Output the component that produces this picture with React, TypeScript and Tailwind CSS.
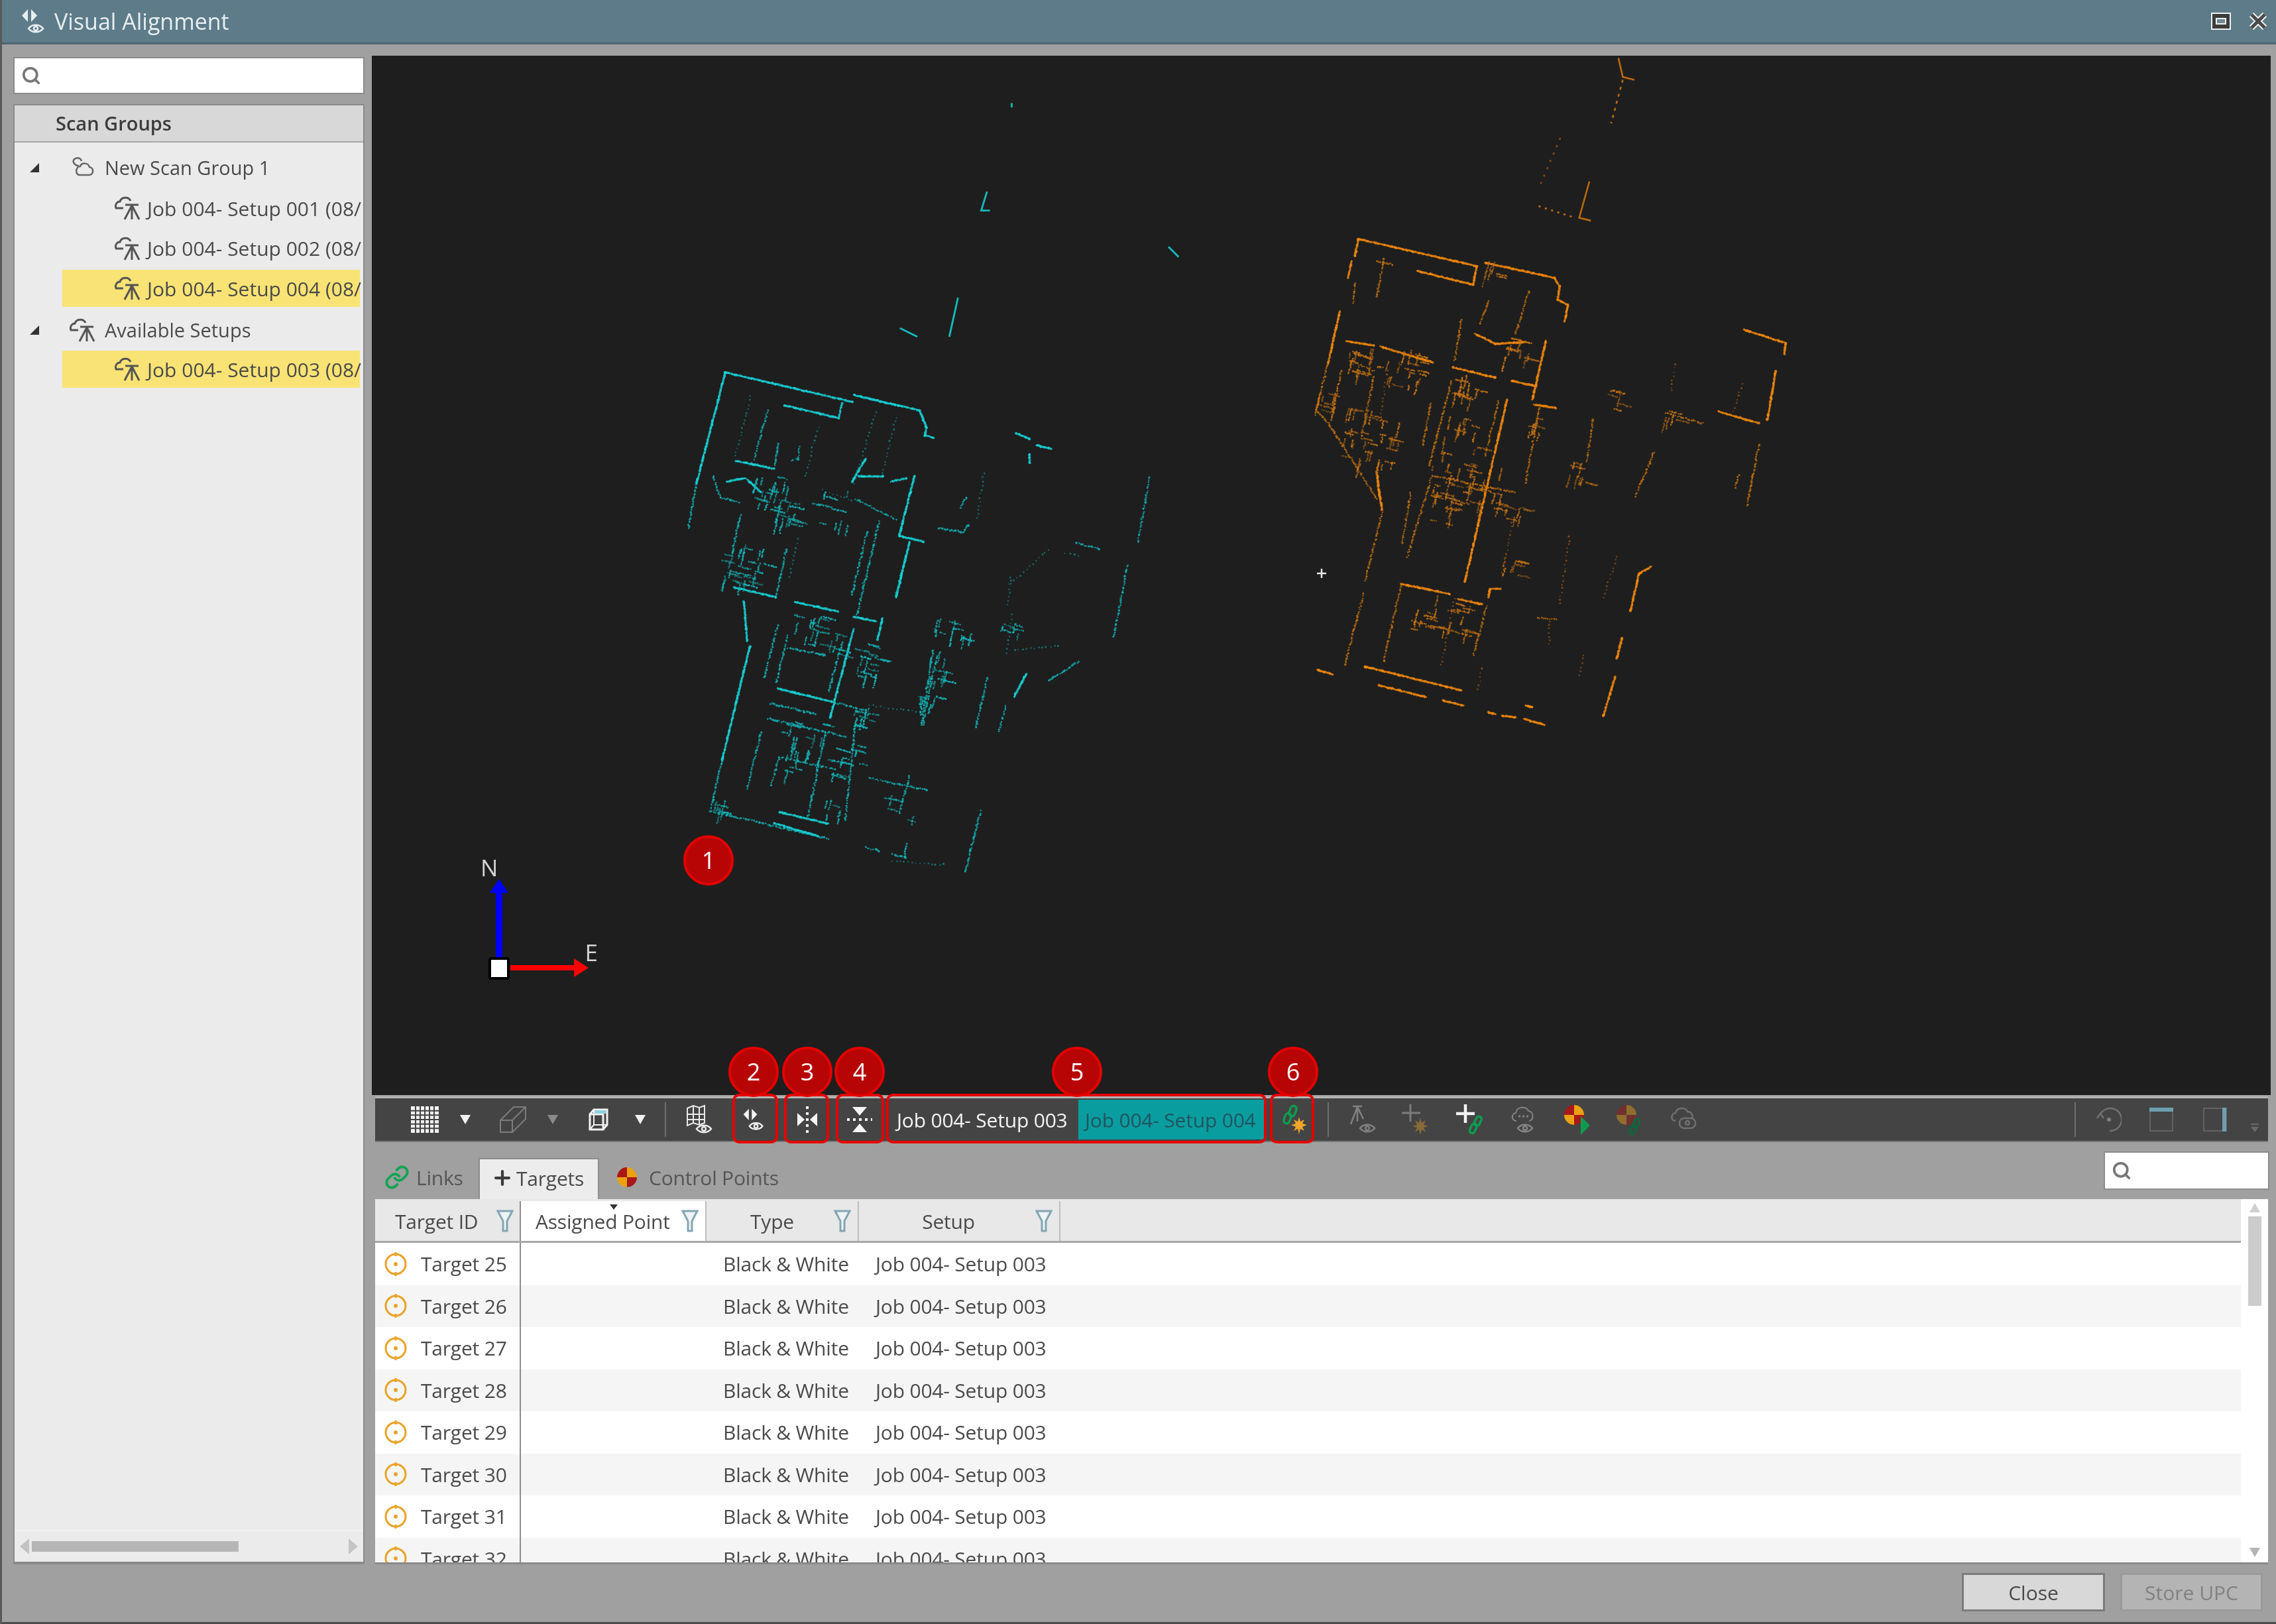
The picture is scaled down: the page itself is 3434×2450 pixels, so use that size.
import { FC, ReactNode } from "react";
import { Link as LinkIcon, Plus, Search } from "lucide-react";

type Seg = number[];
type Cluster = [number, number, number, number];

// wall segments as [x1, y1, x2, y2, ...], strength picked by list
const cyanStrong: Seg[] = [
  [185, 80, 100, 400], [185, 80, 560, 165], [565, 145, 760, 190, 780, 240, 775, 262, 800, 268],
  [360, 175, 520, 212, 530, 170], [745, 378, 705, 530, 700, 552, 770, 568], [190, 395, 245, 385],
  [250, 390, 290, 425], [210, 700, 335, 728], [240, 740, 250, 855], [258, 870, 175, 1200],
  [390, 742, 520, 770], [565, 785, 630, 798], [565, 820, 495, 1075], [340, 992, 500, 1030],
  [330, 1380, 460, 1418], [345, 1348, 490, 1382], [1045, 255, 1085, 272], [1105, 290, 1150, 300],
  [1085, 315, 1085, 340], [560, 395, 600, 330], [580, 380, 650, 380], [675, 395, 720, 385],
  [215, 335, 330, 358], [730, 570, 690, 730], [650, 790, 635, 850], [1075, 950, 1040, 1015],
];
const cyanMedium: Seg[] = [
  [100, 400, 75, 530], [335, 728, 365, 590], [175, 1200, 140, 1345, 490, 1425], [310, 190, 270, 330],
  [340, 285, 330, 355], [405, 295, 400, 330, 380, 335], [150, 380, 170, 440, 225, 455], [230, 490, 205, 600],
  [570, 445, 690, 505], [605, 540, 560, 720], [640, 510, 575, 780], [725, 590, 690, 720],
  [340, 810, 300, 960], [370, 840, 335, 975], [370, 875, 480, 895], [530, 860, 490, 1000],
  [320, 1035, 450, 1065], [310, 1078, 540, 1130], [480, 1120, 430, 1360], [345, 1190, 510, 1225],
  [345, 1190, 320, 1270], [290, 1120, 250, 1280], [570, 1090, 540, 1370], [610, 1250, 780, 1285],
  [730, 1245, 700, 1350], [940, 1345, 895, 1520], [600, 1450, 640, 1460], [680, 1470, 720, 1480],
  [720, 1440, 715, 1480], [1440, 385, 1405, 570], [1375, 635, 1335, 840], [1225, 572, 1290, 590],
  [900, 440, 880, 470], [905, 520, 890, 540, 815, 530], [960, 960, 925, 1105], [1015, 1040, 995, 1115],
  [1230, 915, 1140, 970], [800, 880, 765, 1095], [810, 900, 770, 1095], [500, 1030, 600, 1055],
];
const cyanDim: Seg[] = [
  [680, 1490, 830, 1500], [1190, 600, 1230, 608], [1035, 780, 1015, 890], [1030, 670, 1020, 750],
  [630, 195, 565, 400], [690, 210, 650, 370], [260, 150, 215, 320], [460, 240, 420, 380],
  [1140, 590, 1030, 690], [950, 370, 930, 500], [610, 1040, 760, 1060], [1170, 870, 1040, 880],
  [400, 560, 375, 670], [470, 420, 560, 450], [620, 600, 590, 700],
];
const cyanClusters: Cluster[] = [
  [240, 640, 60, 130], [320, 430, 50, 90], [370, 490, 30, 45], [620, 910, 45, 80], [430, 820, 40, 50],
  [490, 860, 30, 40], [590, 1075, 25, 50], [440, 1160, 80, 110], [175, 1335, 15, 35], [840, 810, 30, 30],
  [895, 855, 20, 20], [810, 930, 40, 50], [1025, 810, 25, 26], [780, 1020, 30, 36], [500, 470, 50, 40],
  [560, 1180, 30, 30], [700, 1330, 40, 24], [510, 1340, 25, 24],
];

const orangeStrong: Seg[] = [
  [195, 60, 545, 140, 535, 195, 370, 155], [570, 130, 775, 175, 790, 200, 785, 240, 815, 255, 805, 305],
  [195, 60, 185, 110], [175, 125, 165, 175], [140, 275, 105, 430], [160, 362, 240, 375], [260, 378, 415, 425],
  [540, 340, 600, 370, 690, 365], [475, 440, 600, 470], [650, 480, 720, 495], [750, 360, 710, 535],
  [715, 550, 780, 560], [635, 535, 510, 1075], [320, 1080, 465, 1110], [490, 1125, 560, 1140],
  [580, 1120, 585, 1095, 615, 1095], [1335, 328, 1460, 368, 1455, 400], [1430, 450, 1405, 595],
  [1260, 570, 1380, 605], [1060, 1030, 1025, 1050, 1000, 1160], [975, 1240, 960, 1300], [955, 1355, 920, 1470],
  [215, 1325, 500, 1395], [255, 1380, 395, 1415], [445, 1425, 505, 1440], [75, 1335, 120, 1348],
  [580, 1460, 600, 1465], [620, 1470, 660, 1475], [685, 1480, 745, 1497], [690, 1440, 710, 1445],
  [250, 750, 255, 800, 265, 860],
];
const orangeMedium: Seg[] = [
  [105, 430, 70, 565, 110, 610, 250, 830], [145, 450, 120, 570], [270, 120, 250, 230], [250, 125, 295, 135],
  [580, 245, 555, 310], [700, 215, 660, 340], [410, 545, 385, 670], [470, 480, 405, 730], [610, 540, 570, 700],
  [730, 560, 690, 780], [350, 810, 325, 960], [410, 770, 340, 1000], [265, 870, 215, 1070], [210, 1110, 155, 1320],
  [320, 1090, 270, 1310], [415, 760, 660, 810], [575, 1145, 535, 1290], [355, 1190, 530, 1235],
  [890, 595, 870, 720], [1070, 690, 1015, 820], [1380, 670, 1345, 850], [1320, 760, 1310, 795],
  [1105, 575, 1215, 605], [725, 1180, 780, 1185], [185, 190, 180, 250], [240, 470, 205, 640], [500, 300, 480, 420],
  [170, 420, 240, 450],
];
const orangeDim: Seg[] = [
  [820, 940, 790, 1140], [960, 1000, 920, 1120], [480, 1125, 440, 1320], [560, 1330, 550, 1390],
  [760, 1190, 760, 1260], [1130, 430, 1120, 510], [1330, 490, 1305, 570], [860, 1290, 850, 1350],
  [650, 900, 620, 1060], [280, 450, 260, 600],
];
const orangeClusters: Cluster[] = [
  [230, 650, 80, 170], [210, 425, 40, 70], [330, 440, 50, 80], [510, 490, 35, 60], [500, 640, 50, 70],
  [480, 770, 60, 90], [560, 800, 60, 80], [450, 850, 50, 60], [650, 1030, 25, 30], [400, 1170, 50, 50],
  [510, 1190, 50, 50], [850, 750, 30, 40], [940, 535, 30, 24], [1115, 590, 20, 20], [100, 540, 25, 40],
  [590, 150, 20, 26], [660, 390, 40, 50], [660, 880, 25, 30], [720, 610, 25, 30],
];

const makeRand = (seed: number) => {
  let s = seed;
  return () => {
    s = (s * 16807) % 2147483647;
    return s / 2147483647;
  };
};

// clutter: short runs of points along the two axes of the building
const scatter = (clusters: Cluster[], color: string, seed: number) => {
  const next = makeRand(seed);
  const dots: ReactNode[] = [];
  clusters.forEach(([cx, cy, r, n], i) => {
    const runs = Math.ceil(n / 4);
    for (let k = 0; k < runs; k++) {
      const x = cx + (next() - 0.5) * r * 2.2;
      const y = cy + (next() - 0.5) * r * 2.2;
      const along = next() < 0.5;
      const dx = along ? 0.97 : -0.24;
      const dy = along ? 0.24 : 0.97;
      const len = 4 + Math.floor(next() * 6);
      const op = 0.45 + next() * 0.5;
      for (let p = 0; p < len; p++) {
        dots.push(
          <circle
            key={`${i}-${k}-${p}`}
            cx={x + dx * p * 5 + (next() - 0.5) * 3}
            cy={y + dy * p * 5 + (next() - 0.5) * 3}
            r={2 + next() * 1.3}
            fill={color}
            opacity={op}
          />,
        );
      }
    }
  });
  return dots;
};

// scan walls are rows of jittered points, not clean lines
const Walls: FC<{ segs: Seg[]; color: string; step: number; jitter: number; r: number; opacity: number; seed: number }> = ({
  segs,
  color,
  step,
  jitter,
  r,
  opacity,
  seed,
}) => {
  const next = makeRand(seed);
  const dots: ReactNode[] = [];
  segs.forEach((s, i) => {
    for (let p = 0; p + 3 < s.length; p += 2) {
      const dx = s[p + 2] - s[p];
      const dy = s[p + 3] - s[p + 1];
      const n = Math.max(1, Math.round(Math.hypot(dx, dy) / step));
      for (let k = 0; k <= n; k++) {
        dots.push(
          <circle
            key={`${i}-${p}-${k}`}
            cx={s[p] + (dx * k) / n + (next() - 0.5) * jitter}
            cy={s[p + 1] + (dy * k) / n + (next() - 0.5) * jitter}
            r={r * (0.75 + next() * 0.5)}
            opacity={opacity * (0.65 + next() * 0.35)}
          />,
        );
      }
    }
  });
  return <g fill={color}>{dots}</g>;
};

const PointCloud = () => (
  <svg viewBox="561 84 2865 1568" className="block h-full w-full">
    <g transform="translate(1000 520) scale(0.51 0.523)">
      <Walls segs={cyanDim} color="#12a5a8" step={12} jitter={5} r={2.6} opacity={0.65} seed={11} />
      <Walls segs={cyanMedium} color="#14b8bc" step={6} jitter={4} r={3} opacity={0.9} seed={23} />
      <Walls segs={cyanStrong} color="#18d0d4" step={3.5} jitter={2} r={3.4} opacity={1} seed={37} />
      {scatter(cyanClusters, "#16b8bc", 7741)}
    </g>
    <g transform="translate(1950 330) scale(0.51)">
      <Walls segs={orangeDim} color="#a85c10" step={12} jitter={5} r={2.6} opacity={0.75} seed={41} />
      <Walls segs={orangeMedium} color="#c0700f" step={6} jitter={4} r={3} opacity={0.95} seed={53} />
      <Walls segs={orangeStrong} color="#ee860e" step={3.5} jitter={2} r={3.5} opacity={1} seed={67} />
      {scatter(orangeClusters, "#c87414", 3313)}
    </g>
    <g transform="scale(2.19)" fill="none">
      <g stroke="#b8690f" strokeWidth="1.2">
        <polyline points="1115,40 1118,53 1126,55" />
        <polyline points="1118,55 1110,85" strokeDasharray="2 3" />
        <polyline points="1095,125 1088,150 1096,152" />
        <polyline points="1060,142 1085,150" strokeDasharray="1.5 3" />
        <polyline points="1075,95 1060,130" strokeDasharray="1.5 4" opacity="0.6" />
      </g>
      <g stroke="#16b8bc" strokeWidth="1.3">
        <polyline points="680,132 676,145 682,145" />
        <polyline points="805,170 812,177" />
        <polyline points="660,205 654,232" />
        <polyline points="620,226 632,232" />
        <polyline points="697,71 697,74" />
      </g>
    </g>
    <path d="M1987 865h14M1994 858v14" stroke="#e8e8e8" strokeWidth="2.5" />
    {/* axis gizmo */}
    <path d="M748 1444v-97h-9l14-21 14 21h-9v97z" fill="#0000ff" />
    <path d="M770 1456h96v-10l22 14-22 14v-10h-96z" fill="#ff0000" />
    <rect x="739" y="1446" width="28" height="30" rx="2" fill="#fff" stroke="#000" strokeWidth="4" />
    <text x="738" y="1322" textAnchor="middle" fontSize="35" fill="#d4d4d4" className="font-['Open_Sans',sans-serif]">
      N
    </text>
    <text x="892" y="1450" textAnchor="middle" fontSize="35" fill="#d4d4d4" className="font-['Open_Sans',sans-serif]">
      E
    </text>
  </svg>
);

const Eye: FC<{ x: number; y: number; color: string }> = ({ x, y, color }) => (
  <g transform={`translate(${x} ${y})`} fill="none" stroke={color} strokeWidth="2.5">
    <path d="M-11 0C-6-7 6-7 11 0 6 7-6 7-11 0z" />
    <circle r="3" />
  </g>
);

const SplitEyeIcon: FC<{ size: number; color?: string }> = ({ size, color = "#f4f4f4" }) => (
  <svg width={size} height={size} viewBox="0 0 40 40">
    <path d="M12 2v19L3 11.500zM17 2v19l9-9.500z" fill={color} />
    <Eye x={24} y={31} color={color} />
  </svg>
);

const MirrorHIcon = () => (
  <svg width="36" height="44" viewBox="0 0 36 44">
    <path d="M3 12l11 10L3 32zM33 12L22 22l11 10z" fill="#f4f4f4" />
    <path d="M18 2v40" stroke="#f4f4f4" strokeWidth="4" strokeDasharray="4 5" />
  </svg>
);

const MirrorVIcon = () => (
  <svg width="40" height="44" viewBox="0 0 40 44">
    <path d="M9 3l11 13L31 3zM9 41l11-13 11 13z" fill="#f4f4f4" />
    <path d="M1 22h38" stroke="#f4f4f4" strokeWidth="4" strokeDasharray="4 5" />
  </svg>
);

const GridIcon = () => (
  <svg width="42" height="40" viewBox="0 0 42 40">
    <rect width="42" height="40" fill="#f2f2f2" />
    <path
      d="M7 0v40M14 0v40M21 0v40M28 0v40M35 0v40M0 6.700h42M0 13.300h42M0 20h42M0 26.700h42M0 33.300h42"
      stroke="#444"
      strokeWidth="2"
    />
  </svg>
);

const BoxIcon = () => (
  <svg width="42" height="42" viewBox="0 0 42 42" fill="none" stroke="#7c7c7c" strokeWidth="2">
    <path d="M2 22L22 2h18v18L20 40H2zM2 22h18v18M20 22L40 2" />
  </svg>
);

const CubeIcon = () => (
  <svg width="30" height="34" viewBox="0 0 30 34" fill="none" stroke="#f2f2f2" strokeWidth="3">
    <path d="M2 9h20v23H2zM2 9l6-7h20v23l-6 7" />
    <path d="M8 2v23h20M8 25l-6 7" strokeWidth="2" />
    <path d="M9 3h18v5H9z" fill="#8fd0dc" stroke="none" />
  </svg>
);

const MapEyeIcon = () => (
  <svg width="40" height="46" viewBox="0 0 40 46" fill="none" stroke="#e8e8e8" strokeWidth="2">
    <path d="M2 6l9-4 9 3 8-3v26l-8 3-9-3-9 4zM11 2v26M20 5v26M2 15h26M2 23h26" />
    <Eye x={27} y={37} color="#e8e8e8" />
  </svg>
);

const Caret: FC<{ dim?: boolean }> = ({ dim }) => (
  <svg width="16" height="14" viewBox="0 0 16 14">
    <path d="M0 0h16L8 14z" fill={dim ? "#8a8a8a" : "#f2f2f2"} />
  </svg>
);

const LinkStarIcon = () => (
  <svg width="40" height="46" viewBox="0 0 40 46">
    <g fill="none" stroke="#0e9a50" strokeWidth="3.500">
      <rect x="13" y="2" width="9" height="16" rx="4.500" transform="rotate(20 17 10)" />
      <rect x="5" y="13" width="9" height="16" rx="4.500" transform="rotate(20 9 21)" />
    </g>
    <path
      d="M27 19l2 7 6-3-3 6 7 2-7 3 3 6-6-3-2 8-2-8-6 3 3-6-7-3 7-2-3-6 6 3z"
      fill="#efa52a"
    />
  </svg>
);

const SurveyEyeIcon = () => (
  <svg width="44" height="46" viewBox="0 0 44 46" fill="none" stroke="#808080" strokeWidth="2.500">
    <path d="M8 3h14M15 4L5 30M15 4v22M15 4l9 18" />
    <Eye x={30} y={36} color="#808080" />
  </svg>
);

const PlusStarIcon = () => (
  <svg width="44" height="46" viewBox="0 0 44 46">
    <path d="M15 0v26M2 13h28" stroke="#7c7c7c" strokeWidth="3" />
    <path
      d="M30 20l2 8 6-4-3 7 7 2-7 2 3 7-6-4-2 8-2-8-6 4 3-7-7-2 7-2-3-7 6 4z"
      fill="#8a6a3a"
    />
  </svg>
);

const PlusLinkIcon = () => (
  <svg width="44" height="46" viewBox="0 0 44 46">
    <path d="M15 0v28M1 14h28" stroke="#f4f4f4" strokeWidth="4.500" />
    <g fill="none" stroke="#0e9a50" strokeWidth="3.500">
      <rect x="30" y="18" width="8" height="15" rx="4" transform="rotate(25 34 25)" />
      <rect x="23" y="29" width="8" height="15" rx="4" transform="rotate(25 27 36)" />
    </g>
  </svg>
);

const CloudEyeIcon = () => (
  <svg width="44" height="46" viewBox="0 0 44 46" fill="none" stroke="#848484" strokeWidth="2">
    <path d="M9 25C1 25 1 14 8 13 9 3 24 2 27 10c8 0 9 15 1 15" />
    <path d="M12 18h3M18 18h3M24 18h3" strokeWidth="3" />
    <Eye x={22} y={36} color="#848484" />
  </svg>
);

const ControlPointGlyph: FC<{ size: number; dim?: boolean }> = ({ size, dim }) => (
  <svg width={size} height={size} viewBox="0 0 32 32" opacity={dim ? 0.45 : 1}>
    <path d="M16 16V1a15 15 0 0 0-15 15z" fill="#a81818" />
    <path d="M16 16V1a15 15 0 0 1 15 15z" fill="#eba212" />
    <path d="M16 16H1a15 15 0 0 0 15 15z" fill="#eba212" />
    <path d="M16 16h15a15 15 0 0 1-15 15z" fill="#a81818" />
  </svg>
);

const CpArrowIcon = () => (
  <svg width="44" height="46" viewBox="0 0 44 46">
    <foreignObject width="32" height="32">
      <ControlPointGlyph size={32} />
    </foreignObject>
    <path d="M26 18l14 14-14 14z" fill="#0e9a50" />
  </svg>
);

const CpLinkIcon = () => (
  <svg width="44" height="46" viewBox="0 0 44 46">
    <foreignObject width="32" height="32">
      <ControlPointGlyph size={32} dim />
    </foreignObject>
    <g fill="none" stroke="#0a6a3a" strokeWidth="3">
      <rect x="27" y="22" width="8" height="13" rx="4" transform="rotate(25 31 28)" />
      <rect x="22" y="32" width="8" height="13" rx="4" transform="rotate(25 26 38)" />
    </g>
  </svg>
);

const CloudScanIcon = () => (
  <svg width="44" height="40" viewBox="0 0 44 40" fill="none" stroke="#707070" strokeWidth="2.500">
    <path d="M8 22C0 22 1 11 8 10 10 1 24 1 26 8c6 0 9 6 7 11" />
    <rect x="14" y="18" width="24" height="15" rx="7" />
    <circle cx="26" cy="25" r="3" />
  </svg>
);

const ResetIcon = () => (
  <svg width="38" height="38" viewBox="0 0 38 38" fill="none" stroke="#707070" strokeWidth="2.500">
    <path d="M6 11A17 17 0 1 1 20 36" />
    <path d="M1 17l5-7 5 7" />
    <circle cx="19" cy="19" r="3" fill="#808080" stroke="none" />
  </svg>
);

const PanelIcon: FC<{ side: "top" | "right" }> = ({ side }) => (
  <svg width="36" height="36" viewBox="0 0 36 36">
    <rect x="1" y="1" width="34" height="34" fill="none" stroke="#626262" strokeWidth="2" />
    {side === "top" ? <rect width="36" height="6" fill="#6d9fb0" /> : <rect x="29" width="6" height="36" fill="#6d9fb0" />}
  </svg>
);

const OverflowIcon = () => (
  <svg width="14" height="14" viewBox="0 0 14 14">
    <path d="M1 1h12" stroke="#6a6a6a" strokeWidth="2" />
    <path d="M1 5h12l-6 8z" fill="#6a6a6a" />
  </svg>
);

const FilterIcon = () => (
  <svg width="26" height="34" viewBox="0 0 26 34" fill="none">
    <path d="M2 2h22L16 17v15h-6V17z" fill="#eef3f5" stroke="#83a5b2" strokeWidth="3" />
  </svg>
);

const TargetIcon = () => (
  <svg width="36" height="36" viewBox="0 0 36 36" className="shrink-0">
    <circle cx="18" cy="18" r="15" fill="none" stroke="#e9a329" strokeWidth="3" />
    <path d="M18 0v6M18 30v6" stroke="#e9a329" strokeWidth="3" />
    <circle cx="18" cy="18" r="3" fill="#e9a329" />
  </svg>
);

const CloudIcon = () => (
  <svg width="36" height="34" viewBox="0 0 36 34" fill="none" stroke="#666" strokeWidth="2.500" className="shrink-0">
    <path d="M14 28h14c8 0 8-11 1-12C27 9 17 9 15 15c-7 0-8 13-1 13z" />
    <path d="M13 14C6 14 1 6 8 3c4-2 8 0 9 4" />
  </svg>
);

const SetupIcon = () => (
  <svg width="42" height="38" viewBox="0 0 42 38" fill="none" stroke="#555" strokeWidth="3" className="shrink-0">
    <path d="M3 19C1 13 5 9 9 9c2-7 13-8 16-1M2 19h12" />
    <path d="M17 14h20M27 14v22M27 15L16 36M27 15l11 21" />
  </svg>
);

const Expander = () => (
  <svg width="16" height="16" viewBox="0 0 16 16" className="shrink-0">
    <path d="M15 1v14H1z" fill="#333" />
  </svg>
);

const Separator = ({ className = "" }: { className?: string }) => <div className={`h-[52px] w-[2px] bg-[#6e6e6e] ${className}`} />;

const Badge: FC<{ n: number; className: string }> = ({ n, className }) => (
  <div
    className={`absolute flex h-[76px] w-[76px] items-center justify-center rounded-full border-[4px] border-[#e40000] bg-[#b70505] text-[36px] font-['Open_Sans',sans-serif] text-white ${className}`}
  >
    {n}
  </div>
);

const Marker = ({ className }: { className: string }) => (
  <div className={`absolute rounded-[10px] border-[4px] border-[#e60000] ${className}`} />
);

const treeRows = [
  { label: "Job 004- Setup 001 (08/", on: false },
  { label: "Job 004- Setup 002 (08/", on: false },
  { label: "Job 004- Setup 004 (08/", on: true },
];

const TreeSetup: FC<{ label: string; on: boolean }> = ({ label, on }) => (
  <div className={`ml-[72px] flex h-[56px] w-[449px] items-center pl-[78px] text-[30px] ${on ? "bg-[#f9e375]" : ""}`}>
    <SetupIcon />
    <span className="ml-[8px] whitespace-nowrap">{label}</span>
  </div>
);

const targets = [25, 26, 27, 28, 29, 30, 31, 32];

const App = () => (
  <div className="relative flex h-[2450px] w-[3434px] flex-col overflow-hidden border-l-[3px] border-[#5a5a5a] bg-[#a0a0a0] font-['Open_Sans',sans-serif] text-[29px] text-[#4a4a4a] blur-[0.7px]">
    {/* title bar */}
    <div className="flex h-[67px] shrink-0 items-center border-b-[3px] border-[#4d6671] bg-[#5d7b88] pl-[27px]">
      <SplitEyeIcon size={40} color="#e8eef0" />
      <span className="ml-[12px] text-[34px] text-[#e6eef0]">Visual Alignment</span>
      <div className="ml-auto flex items-center gap-[27px] pr-[13px]">
        <div className="flex h-[26px] w-[30px] items-center justify-center border-[2px] border-[#f0f0f0] bg-[#3c3c3c]">
          <div className="h-[10px] w-[16px] border-[2px] border-[#f0f0f0] bg-[#6d8994]" />
        </div>
        <svg width="28" height="26" viewBox="0 0 28 26">
          <path d="M4 3l20 20M24 3L4 23" stroke="#f0f0f0" strokeWidth="9" />
          <path d="M4 3l20 20M24 3L4 23" stroke="#4a4a4a" strokeWidth="5" />
        </svg>
      </div>
    </div>

    <div className="flex h-[2293px] shrink-0">
      {/* left panel */}
      <div className="ml-[17px] flex w-[530px] shrink-0 flex-col pt-[19px]">
        <div className="flex h-[56px] items-center border-[2px] border-[#8c8c8c] bg-white pl-[10px]">
          <Search size={30} strokeWidth={3} className="text-[#777]" />
        </div>
        <div className="mt-[15px] flex min-h-0 flex-1 flex-col border-[2px] border-b-[4px] border-[#8a8a8a] bg-[#ebebeb]">
          <div className="flex h-[56px] shrink-0 items-center border-b-[2px] border-[#a8a8a8] bg-[#d8d8d8] pl-[62px] font-semibold text-[#3c3c3c]">
            Scan Groups
          </div>
          <div className="mt-[10px] flex h-[56px] items-center pl-[22px]">
            <Expander />
            <div className="ml-[46px]">
              <CloudIcon />
            </div>
            <span className="ml-[16px] whitespace-nowrap">New Scan Group 1</span>
          </div>
          <div className="flex flex-col gap-[4.500px] pt-[5px]">
            {treeRows.map((r) => (
              <TreeSetup key={r.label} label={r.label} on={r.on} />
            ))}
          </div>
          <div className="mt-[7px] flex h-[56px] items-center pl-[22px]">
            <Expander />
            <div className="ml-[44px]">
              <SetupIcon />
            </div>
            <span className="ml-[12px] whitespace-nowrap">Available Setups</span>
          </div>
          <div className="pt-[3px]">
            <TreeSetup label="Job 004- Setup 003 (08/" on />
          </div>
          <div className="mt-auto flex h-[48px] shrink-0 items-center border-t-[2px] border-[#f2f2f2] pl-[8px] pr-[8px]">
            <svg width="14" height="24" viewBox="0 0 14 24">
              <path d="M14 0v24L0 12z" fill="#c4c4c4" />
            </svg>
            <div className="ml-[4px] h-[16px] w-[312px] bg-[#b6b6b6]" />
            <svg width="14" height="24" viewBox="0 0 14 24" className="ml-auto">
              <path d="M0 0v24l14-12z" fill="#c4c4c4" />
            </svg>
          </div>
        </div>
      </div>

      {/* right side */}
      <div className="ml-[11px] flex min-w-0 flex-1 flex-col pt-[17px] text-[30px] tracking-[-0.2px]">
        <div className="h-[1568px] w-[2865px] shrink-0 bg-[#1e1e1e]">
          <PointCloud />
        </div>

        <div className="ml-[5px] mt-[2px] h-[3px] w-[2856px] shrink-0 bg-[#b4b4b4]" />
        <div className="ml-[5px] flex h-[66px] w-[2856px] shrink-0 items-center border-b-[2px] border-[#777] bg-[#444444]">
          <div className="ml-[54px]">
            <GridIcon />
          </div>
          <div className="ml-[32px]">
            <Caret />
          </div>
          <div className="ml-[43px]">
            <BoxIcon />
          </div>
          <div className="ml-[31px]">
            <Caret dim />
          </div>
          <div className="ml-[46px]">
            <CubeIcon />
          </div>
          <div className="ml-[40px]">
            <Caret />
          </div>
          <Separator className="ml-[29px]" />
          <div className="ml-[30px]">
            <MapEyeIcon />
          </div>
          <div className="ml-[44px]">
            <SplitEyeIcon size={36} />
          </div>
          <div className="ml-[45px]">
            <MirrorHIcon />
          </div>
          <div className="ml-[41px]">
            <MirrorVIcon />
          </div>
          <div className="ml-[24px] flex h-[60px] w-[570px] text-[#f4f4f4]">
            <div className="flex w-[286px] items-center pl-[12px]">Job 004- Setup 003</div>
            <div className="flex w-[284px] items-center bg-[#0a9d9f] pl-[10px] text-[#1f5560]">Job 004- Setup 004</div>
          </div>
          <div className="ml-[22px]">
            <LinkStarIcon />
          </div>
          <Separator className="ml-[30px]" />
          <div className="ml-[28px]">
            <SurveyEyeIcon />
          </div>
          <div className="ml-[36px]">
            <PlusStarIcon />
          </div>
          <div className="ml-[39px]">
            <PlusLinkIcon />
          </div>
          <div className="ml-[39px]">
            <CloudEyeIcon />
          </div>
          <div className="ml-[36px]">
            <CpArrowIcon />
          </div>
          <div className="ml-[35px]">
            <CpLinkIcon />
          </div>
          <div className="ml-[38px]">
            <CloudScanIcon />
          </div>
          <Separator className="ml-[566px]" />
          <div className="ml-[31px]">
            <ResetIcon />
          </div>
          <div className="ml-[42px]">
            <PanelIcon side="top" />
          </div>
          <div className="ml-[45px]">
            <PanelIcon side="right" />
          </div>
          <div className="ml-[35px] mt-[26px]">
            <OverflowIcon />
          </div>
        </div>

        {/* tabs */}
        <div className="relative ml-[5px] flex h-[86px] w-[2856px] shrink-0 items-end">
          <div className="flex h-[62px] w-[156px] items-center pb-[4px] pl-[14px] text-[#555]">
            <LinkIcon size={38} strokeWidth={2.5} className="text-[#12a455]" />
            <span className="ml-[10px]">Links</span>
          </div>
          <div className="flex h-[62px] w-[182px] items-center border-x-[2px] border-t-[2px] border-[#8c8c8c] bg-[#ececec] pb-[4px] pl-[17px]">
            <Plus size={34} strokeWidth={3} className="text-[#3c3c3c]" />
            <span className="ml-[4px]">Targets</span>
          </div>
          <div className="flex h-[62px] items-center pb-[4px] pl-[26px] text-[#555]">
            <ControlPointGlyph size={32} />
            <span className="ml-[17px]">Control Points</span>
          </div>
          <div className="absolute right-[-2px] top-[14px] flex h-[58px] w-[250px] items-center border-[2px] border-[#8c8c8c] bg-white pl-[10px]">
            <Search size={30} strokeWidth={3} className="text-[#777]" />
          </div>
        </div>

        {/* targets table */}
        <div className="relative ml-[5px] flex h-[551px] w-[2856px] shrink-0 flex-col overflow-hidden border-b-[3px] border-[#8a8a8a] bg-white">
          <div className="flex h-[66px] w-[2815px] shrink-0 border-b-[3px] border-[#a8a8a8] bg-[#e8e8e8] pt-[3px] text-[#4a4a4a]">
            <div className="flex w-[220px] items-center justify-between border-r-[2px] border-[#8c8c8c] pl-[30px] pr-[9px]">
              <span>Target ID</span>
              <FilterIcon />
            </div>
            <div className="relative flex w-[280px] items-center justify-between border-r-[2px] border-[#c0c0c0] bg-white pl-[22px] pr-[10px]">
              <span className="whitespace-nowrap">Assigned Point</span>
              <FilterIcon />
              <svg width="12" height="8" viewBox="0 0 12 8" className="absolute left-[134px] top-[5px]">
                <path d="M0 0h12L6 8z" fill="#333" />
              </svg>
            </div>
            <div className="relative flex w-[230px] items-center justify-center border-r-[2px] border-[#c0c0c0] pr-[30px]">
              <span>Type</span>
              <div className="absolute right-[10px] top-[13px]">
                <FilterIcon />
              </div>
            </div>
            <div className="relative flex w-[304px] items-center justify-center border-r-[2px] border-[#c0c0c0] pr-[32px]">
              <span>Setup</span>
              <div className="absolute right-[10px] top-[13px]">
                <FilterIcon />
              </div>
            </div>
          </div>
          {targets.map((t, i) => (
            <div
              key={t}
              className={`flex h-[63.500px] w-[2815px] shrink-0 items-center ${i % 2 === 1 ? "bg-[#f5f5f5]" : "bg-white"}`}
            >
              <div className="flex h-full w-[220px] shrink-0 items-center border-r-[2px] border-[#8c8c8c] pl-[13px]">
                <TargetIcon />
                <span className="ml-[20px]">Target {t}</span>
              </div>
              <div className="w-[280px] shrink-0" />
              <div className="w-[230px] shrink-0 whitespace-nowrap pl-[25px]">Black &amp; White</div>
              <div className="whitespace-nowrap pl-[25px]">Job 004- Setup 003</div>
            </div>
          ))}
          {/* scrollbar */}
          <div className="absolute bottom-0 right-0 top-0 flex w-[41px] flex-col items-center bg-white pt-[6px]">
            <svg width="16" height="14" viewBox="0 0 16 14">
              <path d="M8 0l8 14H0z" fill="#d0d0d0" />
            </svg>
            <div className="mt-[6px] h-[135px] w-[20px] bg-[#cccccc]" />
            <svg width="16" height="14" viewBox="0 0 16 14" className="mb-[8px] mt-auto">
              <path d="M8 14l8-14H0z" fill="#b4b4b4" />
            </svg>
          </div>
        </div>
      </div>
    </div>

    {/* footer */}
    <div className="flex min-h-0 flex-1 items-start justify-end gap-[23px] border-b-[3px] border-[#4c4c4c] pr-[20px] pt-[13px] text-[30px]">
      <div className="flex h-[58px] w-[216px] items-center justify-center border-[3px] border-[#7c7c7c] bg-[#d8d8d8] text-[#4a4a4a]">Close</div>
      <div className="flex h-[58px] w-[215px] items-center justify-center border-[3px] border-[#9a9a9a] bg-[#b4b4b4] text-[#828282]">Store UPC</div>
    </div>

    {/* annotations */}
    <Marker className="left-[1102px] top-[1650px] h-[75px] w-[69px]" />
    <Marker className="left-[1180px] top-[1650px] h-[75px] w-[68px]" />
    <Marker className="left-[1258px] top-[1650px] h-[75px] w-[73px]" />
    <Marker className="left-[1334px] top-[1650px] h-[75px] w-[574px]" />
    <Marker className="left-[1913px] top-[1650px] h-[75px] w-[67px]" />
    <Badge n={1} className="left-[1028px] top-[1260px]" />
    <Badge n={2} className="left-[1096px] top-[1579px]" />
    <Badge n={3} className="left-[1177px] top-[1579px]" />
    <Badge n={4} className="left-[1256px] top-[1579px]" />
    <Badge n={5} className="left-[1584px] top-[1579px]" />
    <Badge n={6} className="left-[1910px] top-[1579px]" />
  </div>
);

export default App;
